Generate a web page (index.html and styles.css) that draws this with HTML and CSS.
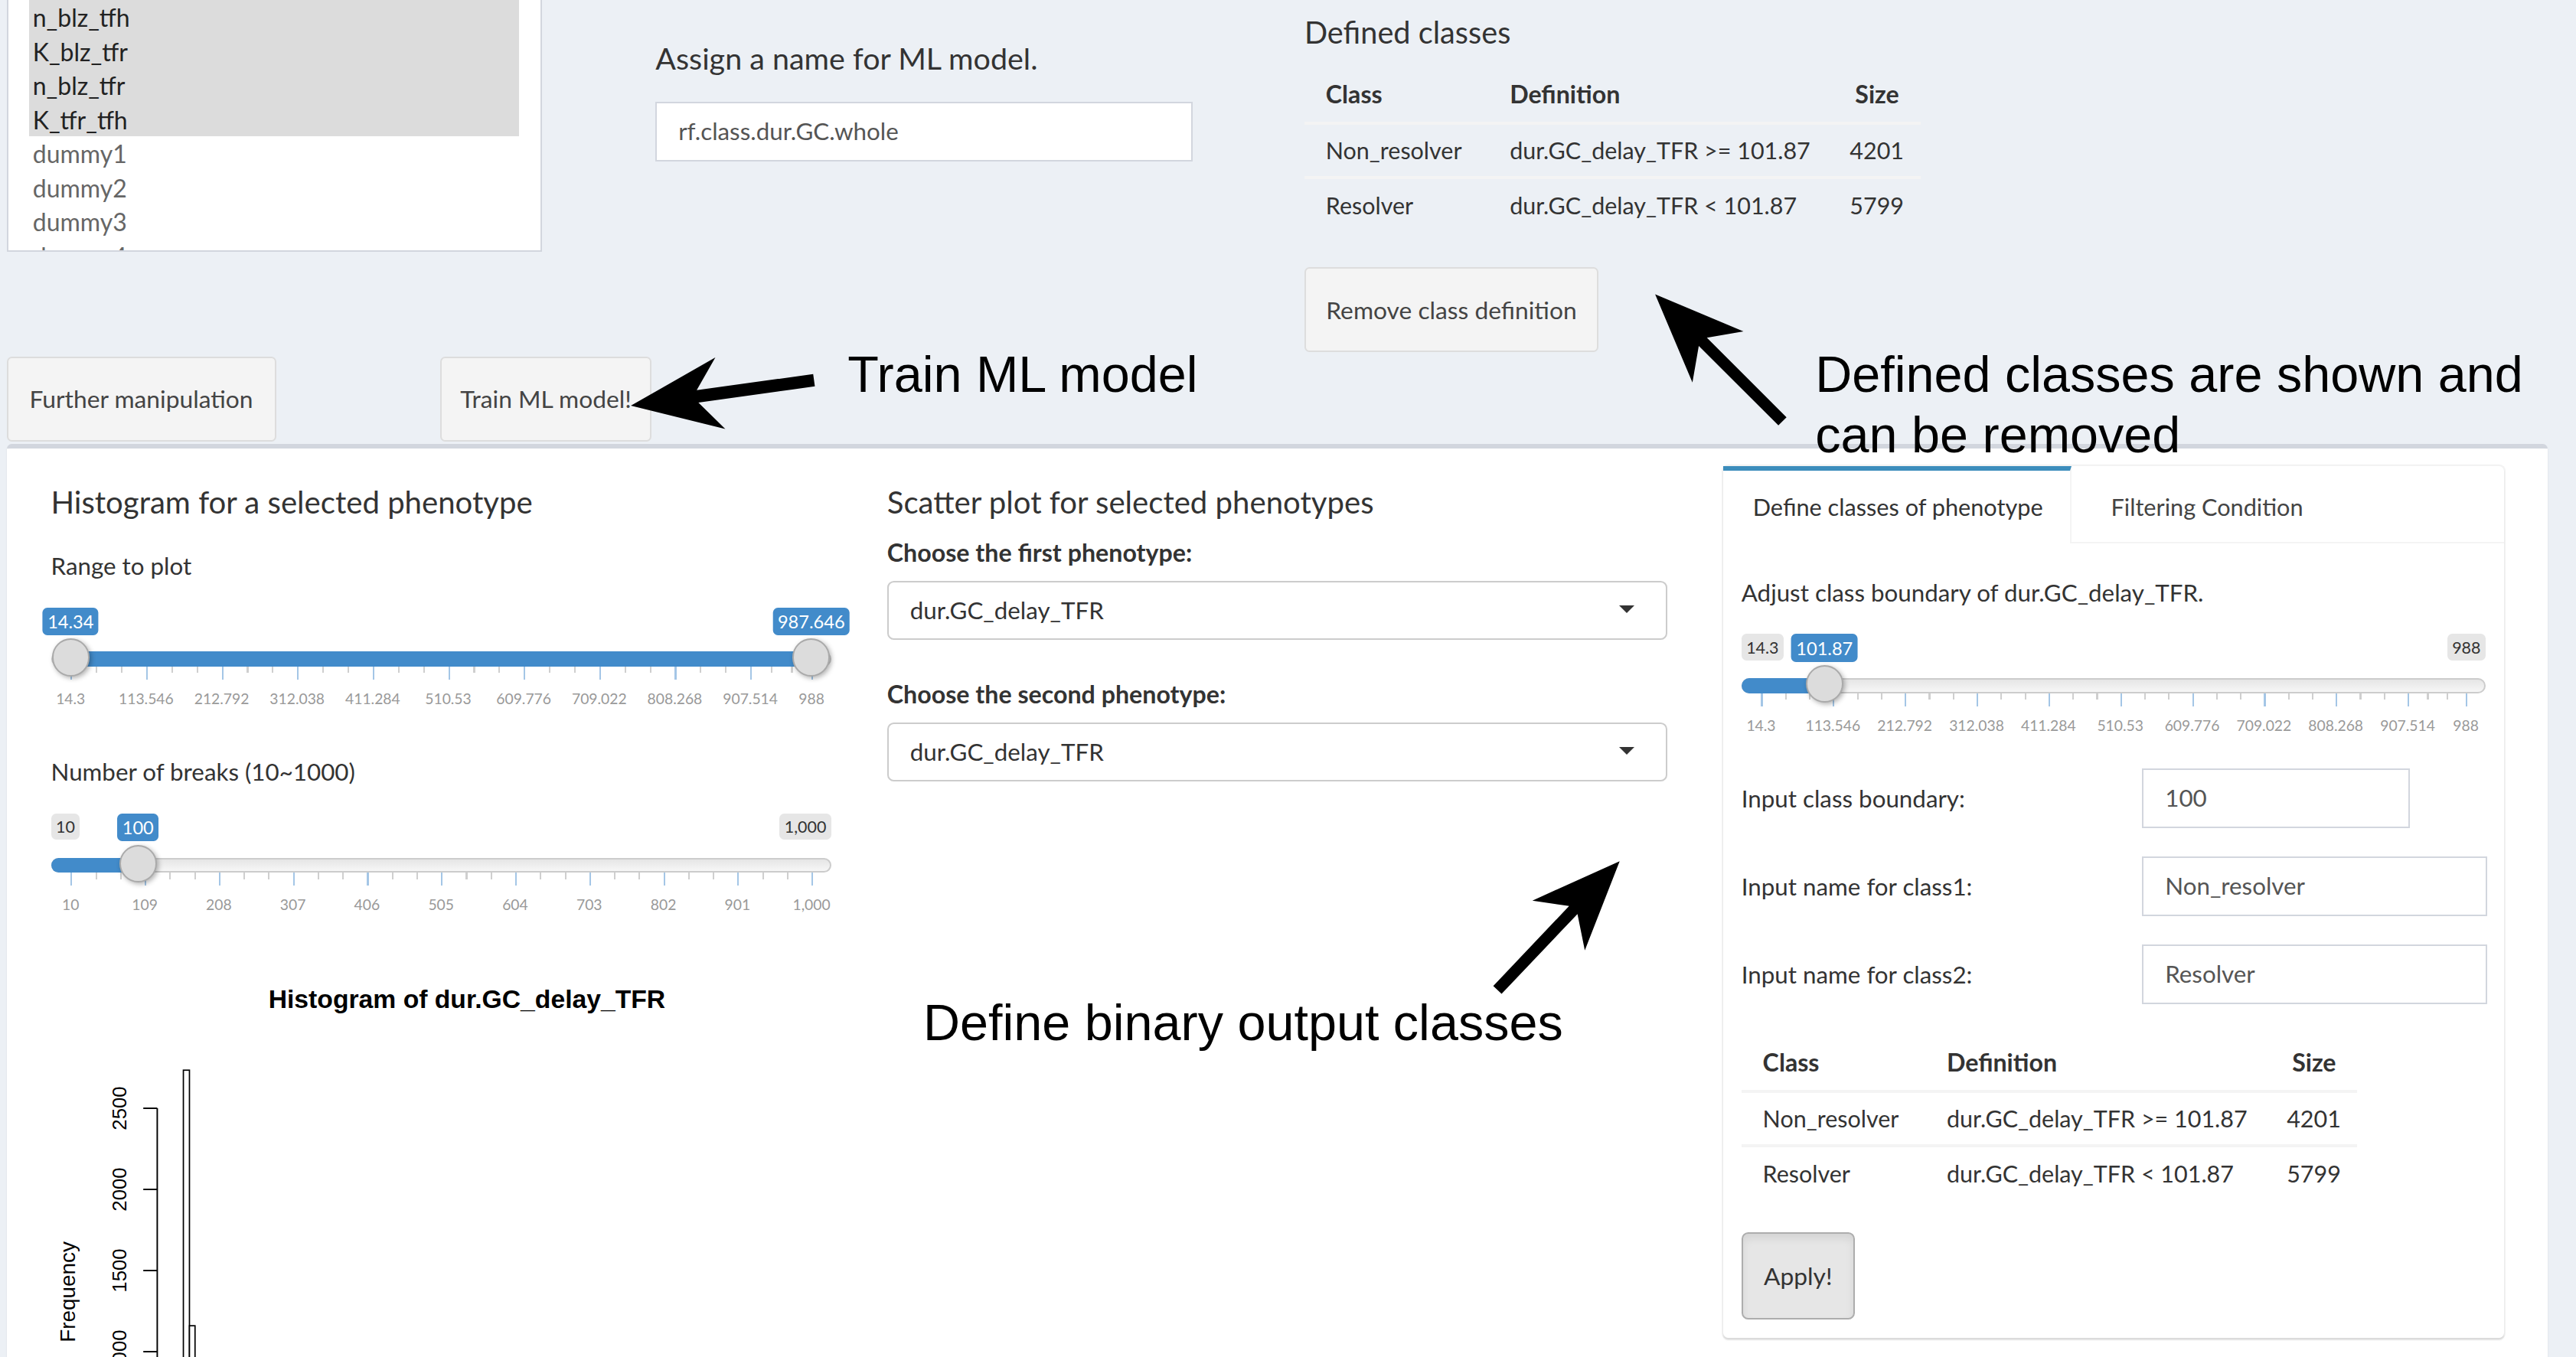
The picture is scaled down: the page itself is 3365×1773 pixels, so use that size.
FILE: index.html
```html
<!DOCTYPE html>
<html lang="en">
<head>
<meta charset="utf-8">
<title>Train ML model</title>
<link rel="stylesheet" href="styles.css">
</head>
<body>
<div class="page">
  <div class="top-row">
    <div class="listbox">
      <div class="opt sel">n_blz_tfh</div>
      <div class="opt sel">K_blz_tfr</div>
      <div class="opt sel">n_blz_tfr</div>
      <div class="opt sel">K_tfr_tfh</div>
      <div class="opt">dummy1</div>
      <div class="opt">dummy2</div>
      <div class="opt">dummy3</div>
      <div class="opt">dummy4</div>
    </div>
    <div class="name-col">
      <label class="name-label">Assign a name for ML model.</label>
      <div class="text-input name-input">rf.class.dur.GC.whole</div>
    </div>
    <div class="classes-col">
      <div class="classes-title">Defined classes</div>
      <table class="cls-table">
        <thead>
          <tr><th class="c1">Class</th><th class="c2">Definition</th><th class="c3 num">Size</th></tr>
        </thead>
        <tbody>
          <tr><td>Non_resolver</td><td>dur.GC_delay_TFR &gt;= 101.87</td><td class="num">4201</td></tr>
          <tr><td>Resolver</td><td>dur.GC_delay_TFR &lt; 101.87</td><td class="num">5799</td></tr>
        </tbody>
      </table>
      <button class="btn remove-btn">Remove class definition</button>
    </div>
  </div>

  <div class="btn-row">
    <button class="btn further-btn">Further manipulation</button>
    <button class="btn train-btn">Train ML model!</button>
  </div>

  <div class="main-box">
    <div class="col">
      <h3 class="box-title">Histogram for a selected phenotype</h3>
      <div class="ctl-label">Range to plot</div>
      <div class="irs" data-min="14.3" data-max="988" data-from="14.34" data-to="987.646" data-from-label="14.34" data-to-label="987.646" data-ticks="14.3|113.546|212.792|312.038|411.284|510.53|609.776|709.022|808.268|907.514|988"></div>
      <div class="ctl-label gap-big">Number of breaks (10~1000)</div>
      <div class="irs" data-min="10" data-max="1000" data-from="100" data-from-label="100" data-min-label="10" data-max-label="1,000" data-ticks="10|109|208|307|406|505|604|703|802|901|1,000"></div>
      <svg class="hist" viewBox="0 0 475 265" width="475" height="265">
        <text class="hist-title" x="253" y="34">Histogram of dur.GC_delay_TFR</text>
        <line x1="64.5" y1="100.2" x2="64.5" y2="300" stroke="#000" stroke-width="0.9"/>
        <line x1="56" y1="100.2" x2="64.5" y2="100.2" stroke="#000" stroke-width="0.9"/>
        <line x1="56" y1="149.6" x2="64.5" y2="149.6" stroke="#000" stroke-width="0.9"/>
        <line x1="56" y1="199" x2="64.5" y2="199" stroke="#000" stroke-width="0.9"/>
        <line x1="56" y1="248.4" x2="64.5" y2="248.4" stroke="#000" stroke-width="0.9"/>
        <text class="axis-num" transform="translate(41.3 100.2) rotate(-90)">2500</text>
        <text class="axis-num" transform="translate(41.3 149.6) rotate(-90)">2000</text>
        <text class="axis-num" transform="translate(41.3 199) rotate(-90)">1500</text>
        <text class="axis-num" transform="translate(41.3 248.4) rotate(-90)">1000</text>
        <text class="axis-title" transform="translate(10 212) rotate(-90)">Frequency</text>
        <rect x="80.4" y="77" width="3.7" height="300" fill="#fff" stroke="#000" stroke-width="0.8"/>
        <rect x="84.1" y="232.6" width="3.4" height="200" fill="#fff" stroke="#000" stroke-width="0.8"/>
      </svg>
    </div>

    <div class="col">
      <h3 class="box-title">Scatter plot for selected phenotypes</h3>
      <div class="bold-label">Choose the first phenotype:</div>
      <div class="select">dur.GC_delay_TFR</div>
      <div class="bold-label gap-sel">Choose the second phenotype:</div>
      <div class="select">dur.GC_delay_TFR</div>
    </div>

    <div class="col">
      <div class="tabbox">
        <div class="tabs">
          <div class="tab active">Define classes of phenotype</div>
          <div class="tab">Filtering Condition</div>
        </div>
        <div class="tab-content">
          <div class="ctl-label">Adjust class boundary of dur.GC_delay_TFR.</div>
          <div class="irs irs-tab" data-min="14.3" data-max="988" data-from="101.87" data-from-label="101.87" data-min-label="14.3" data-max-label="988" data-ticks="14.3|113.546|212.792|312.038|411.284|510.53|609.776|709.022|808.268|907.514|988"></div>
          <div class="form">
            <div class="form-row">
              <span>Input class boundary:</span>
              <div class="text-input short">100</div>
            </div>
            <div class="form-row">
              <span>Input name for class1:</span>
              <div class="text-input">Non_resolver</div>
            </div>
            <div class="form-row">
              <span>Input name for class2:</span>
              <div class="text-input">Resolver</div>
            </div>
          </div>
          <table class="cls-table tab-table">
            <thead>
              <tr><th class="c1">Class</th><th class="c2">Definition</th><th class="c3 num">Size</th></tr>
            </thead>
            <tbody>
              <tr><td>Non_resolver</td><td>dur.GC_delay_TFR &gt;= 101.87</td><td class="num">4201</td></tr>
              <tr><td>Resolver</td><td>dur.GC_delay_TFR &lt; 101.87</td><td class="num">5799</td></tr>
            </tbody>
          </table>
          <button class="btn apply-btn">Apply!</button>
        </div>
      </div>
    </div>
  </div>

  <svg class="annot" viewBox="0 0 1568 826" width="1568" height="826">
    <polygon points="494.98,227.74 424.09,237.59 435.45,217.64 384,247 441.51,261.22 425.13,245.11 496.02,235.26" fill="#000"/>
    <polygon points="1087.47,254.02 1039.0,205.67 1061.26,201.74 1007.5,179.2 1030.2,232.9 1034.06,210.63 1082.53,258.98" fill="#000"/>
    <polygon points="914.04,605.11 960.22,556.45 964.69,578.61 985.9,524.3 932.77,548.33 955.14,551.63 908.96,600.29" fill="#000"/>
  </svg>
  <div class="note note-train">Train ML model</div>
  <div class="note note-defined">Defined classes are shown and<br>can be removed</div>
  <div class="note note-binary">Define binary output classes</div>
</div>
<script src="script.js"></script>
</body>
</html>
```

FILE: styles.css
```css
html { zoom: 2.146; }
* { box-sizing: border-box; }
body {
  margin: 0;
  background: #ecf0f5;
  font-family: Lato, "Open Sans", sans-serif;
  font-size: 14.6px;
  color: #333;
  overflow: hidden;
}
.page { position: relative; width: 1568px; height: 826px; overflow: hidden; }

/* top area */
.top-row { display: flex; height: 217px; }
.listbox {
  margin-left: 4px; width: 326px; height: 153.5px;
  background: #fff; border: 1px solid #d2d6de; border-top: none;
  overflow: hidden; padding: 0 13px;
}
.opt { height: 20.75px; line-height: 21.5px; padding-left: 2px; color: #666; white-space: nowrap; font-size: 14.9px; }
.opt.sel { background: #dcdcdc; color: #222; }
.name-col { margin-left: 69px; width: 327px; padding-top: 25.6px; }
.name-label { display: block; font-size: 18.4px; line-height: 20px; color: #333; }
.text-input {
  height: 36.4px; border: 1px solid #d2d6de; background: #fff;
  padding-left: 13px; line-height: 34.4px; color: #555; font-size: 14.6px; white-space: nowrap;
}
.name-input { margin-top: 16.3px; }
.classes-col { margin-left: 68px; padding-top: 9.6px; }
.classes-title { font-size: 18.5px; line-height: 20px; }

.cls-table { border-collapse: collapse; table-layout: fixed; width: 375px; margin-top: 10.4px; font-size: 14.2px; }
.cls-table th { text-align: left; font-weight: 700; font-size: 15px; height: 35px; padding: 0 13px; border-bottom: 2px solid #f4f4f4; white-space: nowrap; }
.cls-table td { height: 33px; padding: 0 13px; border-top: 2px solid #f4f4f4; white-space: nowrap; }
.cls-table .num { text-align: right; }
.cls-table .c1 { width: 112px; }
.cls-table .c2 { width: 207px; }
.cls-table .c3 { width: 56px; }

.btn {
  font-family: inherit; font-size: 14.8px; color: #444;
  background: #f4f4f4; border: 1px solid #ddd; border-radius: 3px;
  padding: 0 10px; white-space: nowrap;
}
.remove-btn { display: block; margin-top: 21.6px; width: 179px; height: 52px; }
.btn-row { display: flex; height: 52px; }
.btn-row .btn { height: 51.7px; }
.further-btn { margin-left: 4px; width: 164px; }
.train-btn { margin-left: 100px; width: 128.5px; }

/* main box */
.main-box {
  margin-top: 1.5px; margin-left: 4px; width: 1547px; height: 560px;
  background: #fff; border-top: 3px solid #d2d6de; border-radius: 3px 3px 0 0;
  box-shadow: 0 1px 1px rgba(0,0,0,.1);
  display: grid; grid-template-columns: repeat(3, 509px); align-items: start;
  padding: 0 10px;
}
.col { padding: 0 17px; }
.box-title { margin: 22.5px 0 0; font-size: 18.7px; line-height: 20px; font-weight: 400; color: #333; }
.ctl-label { margin-top: 19px; line-height: 20px; }
.gap-big { margin-top: 24px; }
.bold-label { margin-top: 11px; line-height: 20px; font-weight: 700; font-size: 15px; }
.gap-sel { margin-top: 23px; }
.select {
  position: relative; margin-top: 7px; height: 36px;
  border: 1px solid #ccc; border-radius: 4px; padding-left: 13px;
  line-height: 34px; color: #333;
}
.select::after {
  content: ""; position: absolute; right: 19px; top: 14px;
  border-left: 5px solid transparent; border-right: 5px solid transparent; border-top: 5px solid #333;
}

/* slider */
.irs { position: relative; height: 70px; margin-top: 11px; }
.gap-big + .irs { margin-top: 11.5px; }
.irs-line {
  position: absolute; left: 0; right: 0; top: 31px; height: 9px;
  border: 1px solid #ccc; border-radius: 16px;
  background: linear-gradient(to bottom, #ddd -50%, #fff 150%);
}
.irs-bar { position: absolute; top: 31px; height: 9px; background: #428bca; }
.irs-bar.single { border-radius: 16px 0 0 16px; }
.irs-tick { position: absolute; top: 40px; width: 1px; }
.irs-tick.major { height: 8px; background: #a4c6e6; }
.irs-tick.minor { height: 4px; background: #cfcfcf; }
.irs-label {
  position: absolute; top: 54px; font-size: 9px; line-height: 11px; color: #999;
  transform: translateX(-50%); white-space: nowrap;
}
.irs-handle {
  position: absolute; top: 23px; width: 23px; height: 23px; margin-left: -11.5px;
  border-radius: 50%; background: #dcdcdc; border: 1px solid #aaa;
  box-shadow: 1px 1px 3px rgba(0,0,0,.3);
}
.irs-single {
  position: absolute; top: 4px; transform: translateX(-50%);
  background: #428bca; color: #fff; font-size: 11px; line-height: 15px;
  padding: 1px 3px; border-radius: 3px; white-space: nowrap;
}
.irs-min, .irs-max {
  position: absolute; top: 4px; background: #e6e6e6; color: #333;
  font-size: 10px; line-height: 14px; padding: 1px 3px; border-radius: 3px;
}
.irs-min { left: 0; }
.irs-max { right: 0; }

/* histogram */
.hist { display: block; margin-top: 13.5px; overflow: hidden; }
.hist-title { font-family: "Liberation Sans", Arial, sans-serif; font-weight: 700; font-size: 15.7px; text-anchor: middle; dominant-baseline: central; }
.axis-num { font-family: "Liberation Sans", Arial, sans-serif; font-size: 12px; text-anchor: middle; dominant-baseline: central; }
.axis-title { font-family: "Liberation Sans", Arial, sans-serif; font-size: 13px; text-anchor: middle; dominant-baseline: central; }

/* tab box */
.tabbox {
  margin-top: 10.5px; background: #fff; border-radius: 3px;
  box-shadow: 0 1px 1px rgba(0,0,0,.1), 0 0 0 1px #f3f3f3;
}
.tabs { display: flex; border-bottom: 1px solid #f4f4f4; font-size: 14.3px; }
.tab { height: 46px; border-top: 3px solid transparent; line-height: 45px; padding-left: 24px; color: #444; }
.tab.active {
  width: 212px; height: 47px; margin-bottom: -1px; padding-left: 18px;
  border-top-color: #3c8dbc; border-right: 1px solid #f4f4f4; background: #fff; color: #333;
}
.tab-content { padding: 20px 11px 11px; }
.tab-content .ctl-label { margin-top: 0; }
.irs-tab { margin-top: 11.3px; }
.form { display: flex; flex-direction: column; gap: 17.1px; margin-top: 16px; }
.form-row { display: grid; grid-template-columns: 244px 210px; align-items: center; }
.text-input.short { width: 163px; }
.tab-table { margin-top: 18px; }
.apply-btn {
  display: block; margin-top: 20px; width: 69px; height: 53px; padding: 0;
  background: #e6e6e6; border: 1px solid #adadad; border-radius: 4px; color: #333;
  box-shadow: inset 0 3px 5px rgba(0,0,0,.08);
}

/* annotations */
.annot { position: absolute; left: 0; top: 0; width: 1568px; height: 826px; pointer-events: none; }
.note {
  position: absolute; font-family: "Liberation Sans", Arial, sans-serif;
  font-size: 31px; line-height: 37px; color: #000; white-space: nowrap;
}
.note-train { left: 516px; top: 209.5px; }
.note-defined { left: 1105px; top: 209.5px; }
.note-binary { left: 562px; top: 604.5px; }
```

FILE: script.js
```js
document.querySelectorAll('.irs').forEach(function (el) {
  var min = parseFloat(el.dataset.min), max = parseFloat(el.dataset.max);
  function pos(v) { return (v - min) / (max - min); }
  function at(p) { return 'calc(12px + (100% - 24px) * ' + p.toFixed(5) + ')'; }
  function add(cls, text, p) {
    var s = document.createElement('span');
    s.className = cls;
    if (text != null) s.textContent = text;
    if (p != null) s.style.left = at(p);
    el.appendChild(s);
    return s;
  }
  add('irs-line');
  var from = parseFloat(el.dataset.from);
  var hasTo = el.dataset.to !== undefined;
  var to = hasTo ? parseFloat(el.dataset.to) : null;
  var bar = add('irs-bar' + (hasTo ? '' : ' single'));
  if (hasTo) {
    bar.style.left = at(pos(from));
    bar.style.width = 'calc((100% - 24px) * ' + (pos(to) - pos(from)).toFixed(5) + ')';
  } else {
    bar.style.left = '0';
    bar.style.width = 'calc(12px + (100% - 24px) * ' + pos(from).toFixed(5) + ')';
  }
  var labels = el.dataset.ticks.split('|');
  var vals = labels.map(function (t) { return parseFloat(t.replace(/,/g, '')); });
  for (var i = 0; i < vals.length; i++) {
    add('irs-tick major', null, pos(vals[i]));
    add('irs-label', labels[i], pos(vals[i]));
    if (i < vals.length - 1) {
      for (var k = 1; k < 3; k++) {
        add('irs-tick minor', null, pos(vals[i] + (vals[i + 1] - vals[i]) * k / 3));
      }
    }
  }
  if (el.dataset.minLabel) add('irs-min', el.dataset.minLabel);
  if (el.dataset.maxLabel) add('irs-max', el.dataset.maxLabel);
  add('irs-single', el.dataset.fromLabel, pos(from));
  if (hasTo) add('irs-single', el.dataset.toLabel, pos(to));
  add('irs-handle', null, pos(from));
  if (hasTo) add('irs-handle', null, pos(to));
});
```
